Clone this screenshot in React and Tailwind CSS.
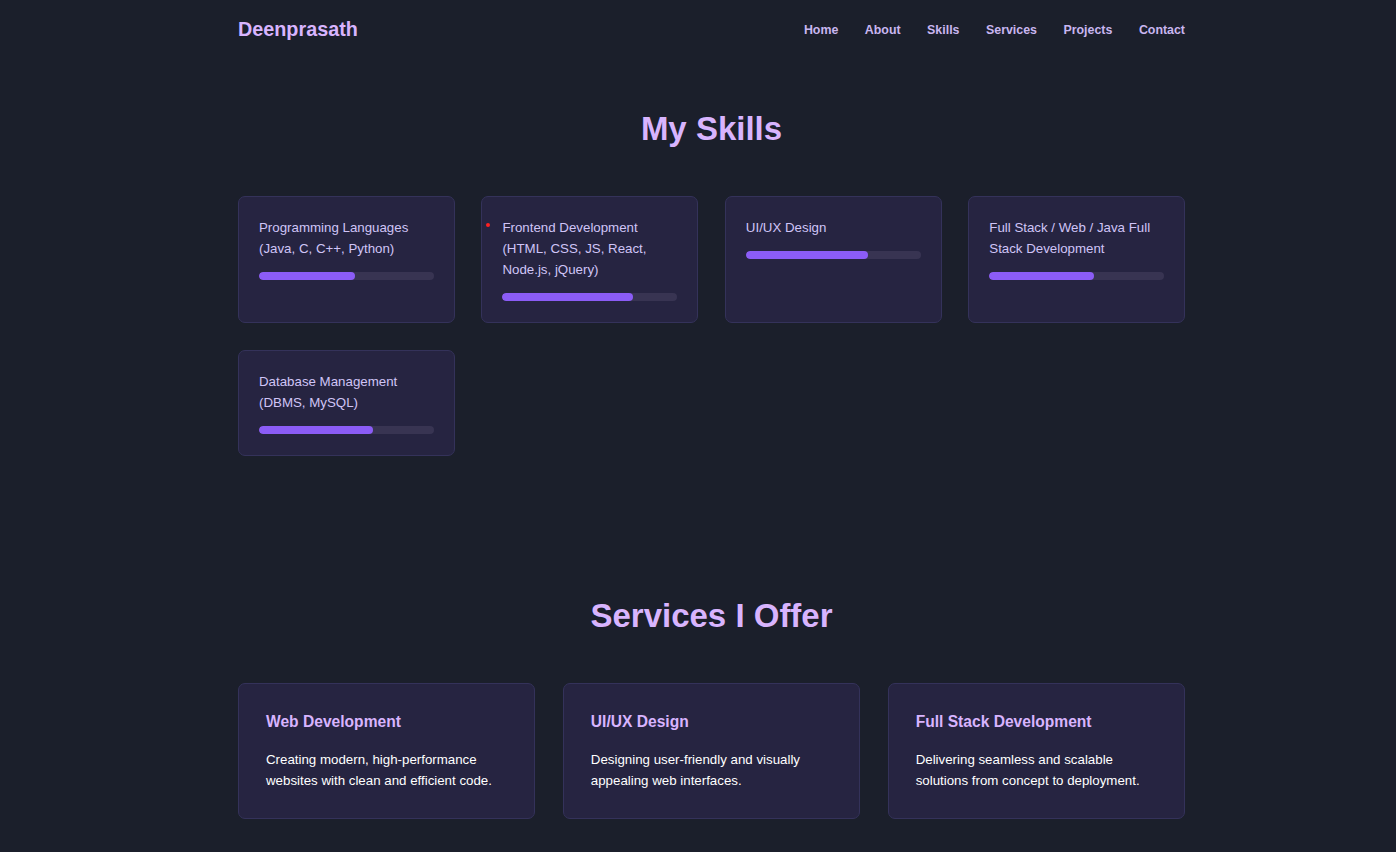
import React from "react";

const skills = [
  { name: "Programming Languages (Java, C, C++, Python)", pct: 55 },
  { name: "Frontend Development (HTML, CSS, JS, React, Node.js, jQuery)", pct: 75, dot: true },
  { name: "UI/UX Design", pct: 70 },
  { name: "Full Stack / Web / Java Full Stack Development", pct: 60 },
  { name: "Database Management (DBMS, MySQL)", pct: 65 },
];

const services = [
  { title: "Web Development", desc: "Creating modern, high-performance websites with clean and efficient code." },
  { title: "UI/UX Design", desc: "Designing user-friendly and visually appealing web interfaces." },
  { title: "Full Stack Development", desc: "Delivering seamless and scalable solutions from concept to deployment." },
];

const nav = ["Home", "About", "Skills", "Services", "Projects", "Contact"];

export default function App() {
  return (
    <div
      className="min-h-[852px] bg-[#1b1f2b] flex justify-center pl-[27px]"
      style={{ fontFamily: '"Liberation Sans", Arial, sans-serif' }}
    >
      <div className="w-[947px] flex flex-col">
        <header className="h-[60px] flex items-center justify-between">
          <div className="text-[19.8px] font-bold text-[#d8b4fe] leading-none">Deenprasath</div>
          <nav className="flex items-center gap-[26.5px]">
            {nav.map((n) => (
              <span key={n} className="text-[12.4px] font-bold text-[#c9b6f0] leading-none">
                {n}
              </span>
            ))}
          </nav>
        </header>

        <section className="pt-[50px]">
          <h2 className="text-[33px] font-bold text-[#d8b4fe] text-center leading-[38px]">My Skills</h2>
          <div className="mt-[48px] grid grid-cols-4 gap-x-[26.7px] gap-y-[27px]">
            {skills.map((s) => (
              <div
                key={s.name}
                className="relative bg-[#262441] border border-[#34325a] rounded-[7px] px-[20px] pt-[20px] pb-[21px]"
              >
                {s.dot && (
                  <span className="absolute left-[4px] top-[26px] w-[4px] h-[4px] rounded-full bg-[#ff2020]" />
                )}
                <div className="text-[13.3px] leading-[21px] text-[#d0c4f7]">{s.name}</div>
                <div className="mt-[13px] h-[8px] rounded-full bg-[#383452] overflow-hidden">
                  <div className="h-full rounded-full bg-[#8b5cf6]" style={{ width: `${s.pct}%` }} />
                </div>
              </div>
            ))}
          </div>
        </section>

        <section className="pt-[141px] pb-[33px]">
          <h2 className="text-[33px] font-bold text-[#d8b4fe] text-center leading-[38px]">Services I Offer</h2>
          <div className="mt-[48px] grid grid-cols-3 gap-[27.5px]">
            {services.map((s) => (
              <div
                key={s.title}
                className="bg-[#262441] border border-[#34325a] rounded-[7px] h-[136px] px-[27px] pt-[27px]"
              >
                <div className="text-[15.6px] font-bold text-[#d8b4fe] leading-[22px]">{s.title}</div>
                <div className="mt-[16px] text-[13.3px] leading-[21px] text-white">{s.desc}</div>
              </div>
            ))}
          </div>
        </section>
      </div>
    </div>
  );
}
